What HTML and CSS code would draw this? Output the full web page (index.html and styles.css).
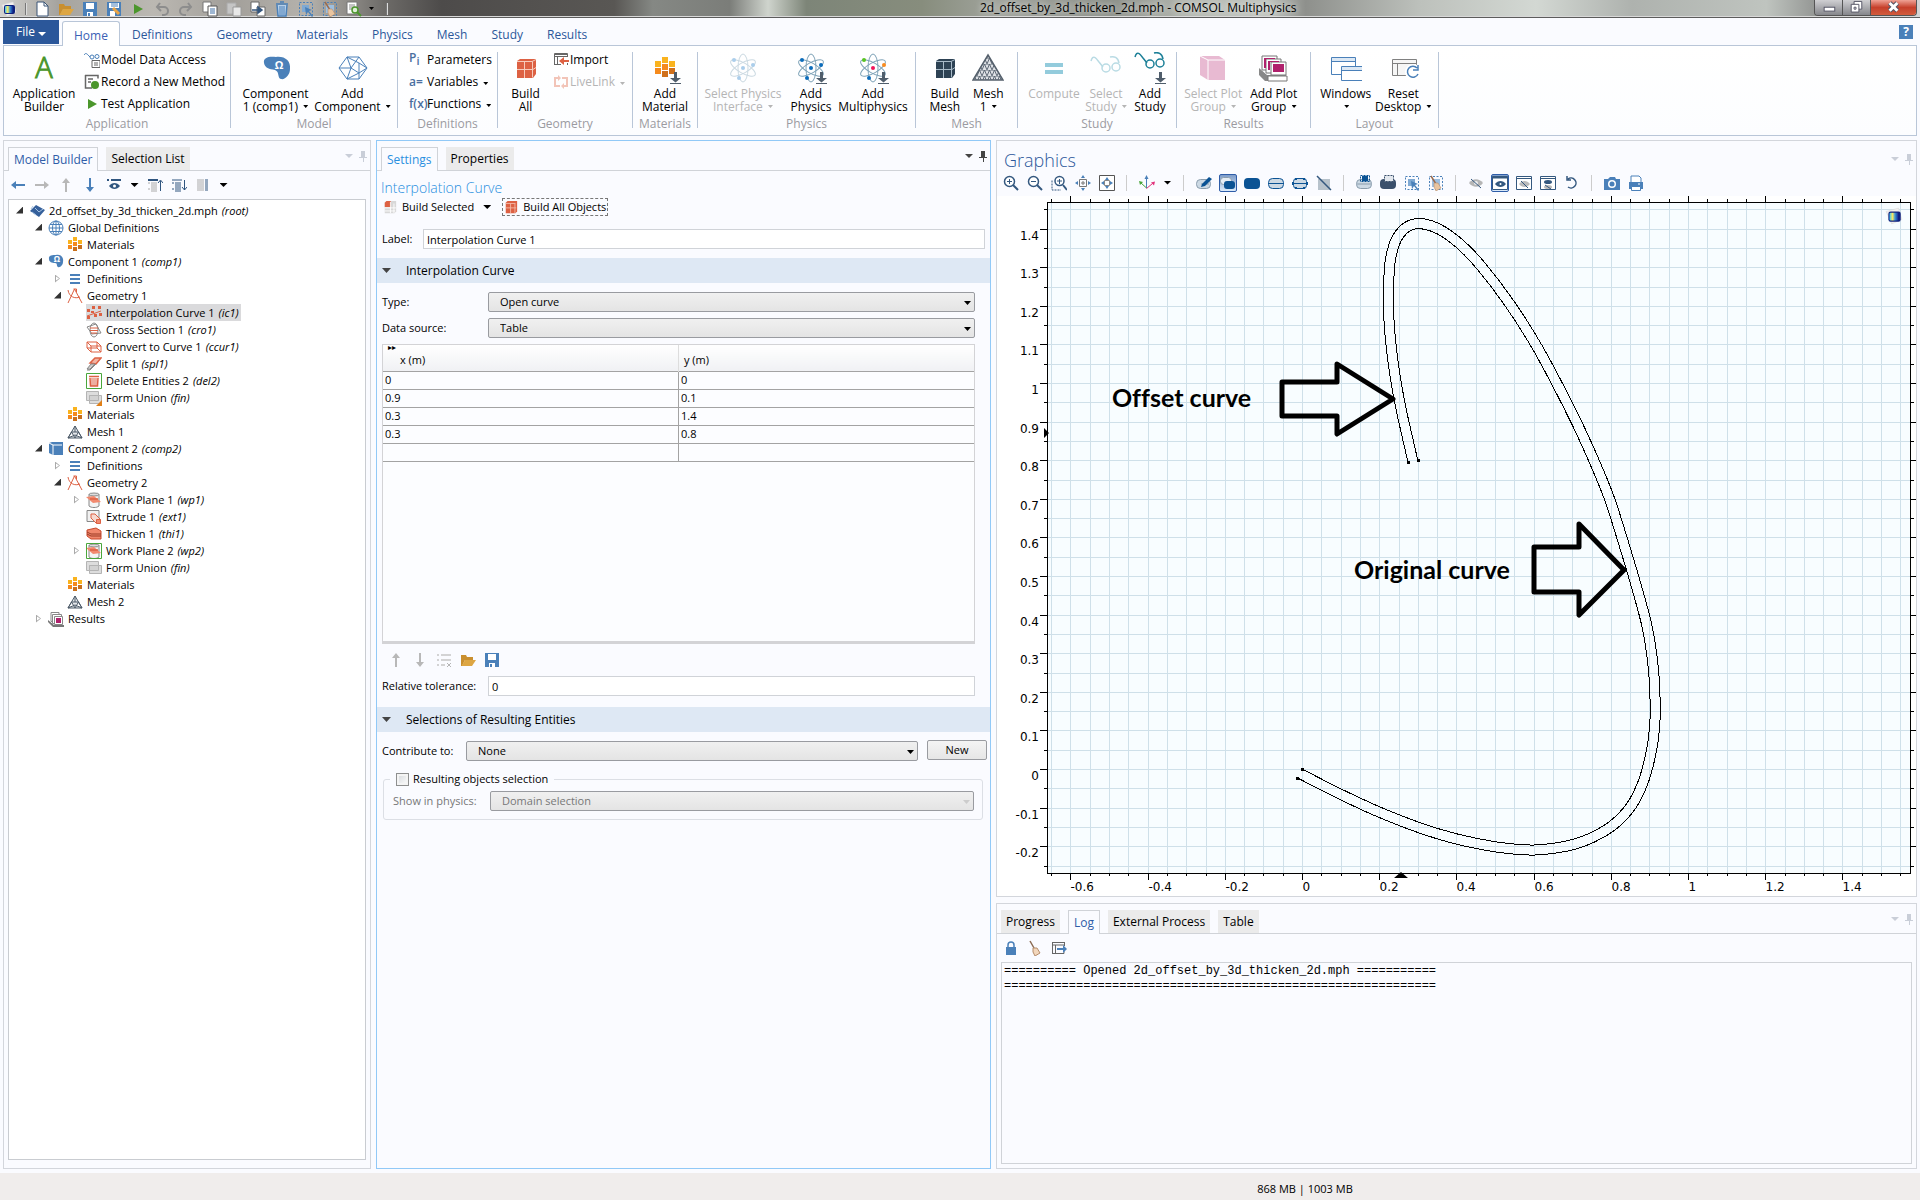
FILE: index.html
```html
<!DOCTYPE html>
<html lang="en">
<head>
<meta charset="utf-8">
<title>2d_offset_by_3d_thicken_2d.mph - COMSOL Multiphysics</title>
<link rel="stylesheet" href="styles.css">
</head>
<body>
<svg class="sprite" aria-hidden="true">
  <defs>
    <linearGradient id="logo-fill" x1="0" y1="0" x2="1" y2="0">
      <stop offset="0" stop-color="#3cc8ff"/><stop offset=".35" stop-color="#ffe95c"/><stop offset=".6" stop-color="#3f9ad8"/><stop offset="1" stop-color="#10208c"/>
    </linearGradient>
    <pattern id="mesh-fill" width="5" height="6" patternUnits="userSpaceOnUse">
      <path d="M0 0H5M0 6L2.500 0L5 6" fill="none" stroke="#5b6673" stroke-width="1"/>
    </pattern>
  </defs>
  <symbol id="i-logo" viewBox="0 0 16 16"><path d="M1 4L12 1L15 11L6 15z" fill="#f3f0ee" stroke="#ddd" stroke-width=".6"/><rect x="3" y="4" width="11" height="9" rx="2" fill="#10207c"/><rect x="4" y="5" width="8" height="7" rx="1" fill="url(#logo-fill)"/></symbol>
  <symbol id="i-new" viewBox="0 0 16 16"><path d="M3 1h7l4 4v10H3z" fill="#fff" stroke="#3a5576"/><path d="M10 1v4h4" fill="none" stroke="#3a5576"/></symbol>
  <symbol id="i-open" viewBox="0 0 16 16"><path d="M1 14V3h5l1 2h6v3H5L2 14z" fill="#c98f2f"/><path d="M5 8h11l-4 6H1.500z" fill="#dda643"/></symbol>
  <symbol id="i-save" viewBox="0 0 16 16"><path d="M1 1h14v14H1z" fill="#4a80b9"/><path d="M4 2h8v6H4zM5 11h6v4H5z" fill="#fff"/><path d="M6 12h2v3H6z" fill="#4a80b9"/></symbol>
  <symbol id="i-saveas" viewBox="0 0 16 16"><path d="M1 1h14v14H1z" fill="#4a80b9"/><path d="M3 2h10v5H3zM4 10h5v5H4z" fill="#fff"/><path d="M7 7l6 6" stroke="#e8a548" stroke-width="3"/><path d="M5 5h7M5 3h7" stroke="#4a80b9"/></symbol>
  <symbol id="i-play" viewBox="0 0 16 16"><path d="M4 3l9 5-9 5z" fill="#4b962c"/></symbol>
  <symbol id="i-undo" viewBox="0 0 16 16"><path d="M3 6h7a4 4 0 0 1 0 8H8M6 2L3 6l4 4" fill="none" stroke="#8d8d8d" stroke-width="2"/></symbol>
  <symbol id="i-redo" viewBox="0 0 16 16"><path d="M13 6H6a4 4 0 0 0 0 8h2M10 2l3 4-4 4" fill="none" stroke="#8d8d8d" stroke-width="2"/></symbol>
  <symbol id="i-copy" viewBox="0 0 16 16"><path d="M1 1h8v10H1z" fill="#fff" stroke="#777"/><path d="M6 5h9v10H6z" fill="#fff" stroke="#555"/><path d="M8 8h5M8 10h5M8 12h5" stroke="#3f6fa5"/></symbol>
  <symbol id="i-paste" viewBox="0 0 16 16"><path d="M1 2h9v11H1z" fill="#c5c5c5" stroke="#aaa"/><path d="M7 6h8v9H7z" fill="#e8e8e8" stroke="#999"/></symbol>
  <symbol id="i-dup" viewBox="0 0 16 16"><path d="M1 1h8v10H1zM7 6h8v9H7z" fill="#fff" stroke="#666"/><path d="M2 9h8M8 6l4 3-4 3z" fill="#34557c" stroke="#34557c" stroke-width="1.500"/></symbol>
  <symbol id="i-trash" viewBox="0 0 16 16"><path d="M2 3h12M6 1h4M3 4l1 11h8l1-11" fill="#b8d0e8" stroke="#4a80b9" stroke-width="1.500"/><path d="M6 5v9M8 5v9M10 5v9" stroke="#4a80b9"/></symbol>
  <symbol id="i-select" viewBox="0 0 16 16"><rect x="1.500" y="1.500" width="13" height="13" fill="none" stroke="#4a80b9" stroke-dasharray="2 1.500"/><path d="M4 4h7v7H4z" fill="#7fa9d3"/><path d="M7 6l7 3-3 1 4 5-1 1-4-5-2 3z" fill="#4a80b9"/></symbol>
  <symbol id="i-clear" viewBox="0 0 16 16"><rect x="1.500" y="1.500" width="13" height="13" fill="none" stroke="#4a80b9" stroke-dasharray="2 1.500"/><path d="M4 4h8v8H4z" fill="#9dbfe0"/><path d="M3 1l5 8" stroke="#9a6b4d" stroke-width="1.500"/><path d="M6 8l4 0 3 5-5 3-2-4z" fill="#e9c5a0" stroke="#b48c6b" stroke-width=".6"/></symbol>
  <symbol id="i-find" viewBox="0 0 16 16"><path d="M1 1h10v12H1z" fill="#fff" stroke="#777"/><path d="M3 4h6M3 6h6M3 8h3" stroke="#888"/><circle cx="9" cy="9" r="3" fill="#dff0d8" stroke="#4b962c" stroke-width="1.500"/><path d="M11 11l4 4" stroke="#4b962c" stroke-width="2"/></symbol>

  <symbol id="b-comp" viewBox="0 0 32 32"><path d="M4 11C3 5 10 4 16 5C25 4 31 9 30 17C30 23 25 28 21 27C17 26 20 20 15 18C9 17 5 16 4 11z" fill="#4a80b9"/></symbol>
  <symbol id="b-addcomp" viewBox="0 0 32 32"><path d="M2 16L10 5H22L30 16L22 27H10zM10 5L14 16L10 27M2 16L14 16M10 5L22 11L30 16M14 16L22 5M14 16L22 21L30 16M22 11V21L10 27M22 21L22 27" fill="none" stroke="#4a80b9"/></symbol>
  <symbol id="b-cube" viewBox="0 0 32 32"><path d="M7 9l3-2h16l0 15-3 4H7z" fill="#dd6143"/><path d="M7 9.500h15l4-2M22.500 9.500v16M14.500 9v17M7 17.500h16l3-2" fill="none" stroke="#f7cabb"/></symbol>
  <symbol id="b-cube-dark" viewBox="0 0 32 32"><path d="M7 9l3-2h16l0 15-3 4H7z" fill="#2d4254"/><path d="M7 9.500h15l4-2M22.500 9.500v16M14.500 9v17M7 17.500h16l3-2" fill="none" stroke="#a8bac8"/></symbol>
  <symbol id="b-mat" viewBox="0 0 32 32"><g stroke-width="0"><path d="M6 9h6v6H6zM13 5h6v6h-6zM20 9h6v6h-6z" fill="#fab31e"/><path d="M6 16h6v6H6zM13 12h6v6h-6z" fill="#f58a1c"/><path d="M13 19h6v6h-6zM20 16h6v6h-6z" fill="#d0701c"/></g><use href="#down-mark"/></symbol>
  <symbol id="down-mark" viewBox="0 0 32 32"><path d="M25 20h3v6h4l-5.500 4.500L21 26h4zM21 31h11v1H21z" fill="#4f5d6b"/></symbol>
  <g id="atom"><g fill="none" stroke="#7fa3b8" stroke-width="1"><ellipse cx="16" cy="16" rx="5" ry="14"/><ellipse cx="16" cy="16" rx="5" ry="14" transform="rotate(60 16 16)"/><ellipse cx="16" cy="16" rx="5" ry="14" transform="rotate(120 16 16)"/></g></g>
  <symbol id="b-atom-off" viewBox="0 0 32 32"><g opacity=".4"><use href="#atom"/><g fill="#2f86cf"><circle cx="16" cy="16" r="2"/><circle cx="7" cy="8" r="2"/><circle cx="26" cy="13" r="2"/><circle cx="12" cy="26" r="2"/></g></g></symbol>
  <symbol id="b-atom" viewBox="0 0 32 32"><use href="#atom"/><g fill="#0b6cbb"><circle cx="16" cy="16" r="2"/><circle cx="7" cy="8" r="2"/><circle cx="26" cy="13" r="2"/><circle cx="12" cy="26" r="2"/></g><use href="#down-mark"/></symbol>
  <symbol id="b-atom-multi" viewBox="0 0 32 32"><use href="#atom"/><circle cx="16" cy="16" r="2" fill="#f0145a"/><circle cx="7" cy="8" r="2" fill="#58c322"/><circle cx="27" cy="13" r="2" fill="#fa8b1e"/><circle cx="12" cy="26" r="2" fill="#0b6cbb"/><use href="#down-mark"/></symbol>
  <symbol id="b-mesh" viewBox="0 0 32 32"><path d="M16 3L31 28H1z" fill="#dfe2e6"/><path d="M16 3L31 28H1z" fill="url(#mesh-fill)" stroke="#55606c" stroke-width="1.500"/></symbol>
  <symbol id="b-equal" viewBox="0 0 32 32"><path d="M7 11h18v4H7zM7 18h18v4H7z" fill="#93cbdc"/></symbol>
  <g id="glasses" fill="none" stroke-width="1.500"><path d="M1 9C3 2 6 6 9 10L13 15M20 5C24 4 28 5 29 11"/><circle cx="16" cy="16" r="4"/><circle cx="26" cy="15" r="4"/></g>
  <symbol id="b-glasses-off" viewBox="0 0 32 32"><g stroke="#b9dbe4"><use href="#glasses"/></g></symbol>
  <symbol id="b-glasses" viewBox="0 0 32 32"><g stroke="#1b7f97" transform="translate(0 -4)"><use href="#glasses"/></g><use href="#down-mark"/></symbol>
  <symbol id="b-plot-off" viewBox="0 0 32 32"><path d="M3 4l19 0 6 4v20H11L3 23z" fill="#e8bad2"/><path d="M3 4l8 4h17M11 8v20" fill="none" stroke="#fff"/></symbol>
  <symbol id="b-plot" viewBox="0 0 32 32"><g stroke="#777" fill="#fff"><path d="M4 4h15v14H4z"/><path d="M8 7h15v14H8z"/><path d="M13 10h15v13H13z"/></g><path d="M6 6h11v1H8v9H6zM10 9h11v1h-9v8h-2zM15 12h11v8H15z" fill="#b0216c"/><path d="M1 16v7l6 6h21v-6H9z" fill="#888"/><path d="M10 24h19v5H10z" fill="#fff" stroke="#777"/></symbol>
  <symbol id="b-windows" viewBox="0 0 32 32"><g fill="#fff" stroke="#4a80b9"><path d="M1.500 5.500h24v17h-24z"/><path d="M11.500 14.500h21v14h-21z"/></g><path d="M2 6h23v3H2zM12 15h20v3H12z" fill="#dce8f4"/><path d="M1 9.500h24M12 18.500h20" stroke="#4a80b9"/></symbol>
  <symbol id="b-reset" viewBox="0 0 32 32"><path d="M5.500 7.500h24v16h-24zM5 11.500h25M10.500 12v12" fill="#f6f6f6" stroke="#808080"/><circle cx="26" cy="20" r="8" fill="#fff"/><path d="M30 16a5.500 5.500 0 1 0 1 6M31 13v5h-5" fill="none" stroke="#4a80b9" stroke-width="1.500"/></symbol>

  <symbol id="i-access" viewBox="0 0 16 16"><path d="M0 3C2 0 3 2 6 5" fill="none" stroke="#4a80b9"/><circle cx="8" cy="5" r="2" fill="none" stroke="#4a80b9"/><circle cx="13" cy="4.500" r="2" fill="none" stroke="#4a80b9"/><path d="M8 8.500h8v7H8zM10 11h4M10 13h4" fill="#fff" stroke="#666"/></symbol>
  <symbol id="i-record" viewBox="0 0 16 16"><path d="M1 1.500h13v3M1.500 1v13H8M4 5h5M4 8h3" fill="none" stroke="#666" stroke-width="1.500"/><circle cx="11" cy="11" r="4" fill="#4b962c"/></symbol>
  <symbol id="i-import" viewBox="0 0 16 16"><path d="M1 2.500h14M1.500 13V1.500h13V5M1 4.500h14M1 12.500h7M4.500 5v8M14.500 11v2" fill="none" stroke="#666"/><path d="M16 9H8" stroke="#dd6143" stroke-width="2"/><path d="M11 5v8L6 9z" fill="#dd6143"/></symbol>
  <symbol id="i-livelink" viewBox="0 0 16 16"><path d="M6 4H2v8h4M4 12h3M10 12h4V4h-4M12 4H9" fill="none" stroke="#f2c4b8" stroke-width="2"/><path d="M5 1l3 3-3 3zM11 9l-3 3 3 3z" fill="#f2c4b8"/></symbol>

  <symbol id="i-left" viewBox="0 0 16 16"><path d="M1 8l5-4v3h9v2H6v3z"/></symbol>
  <symbol id="i-right" viewBox="0 0 16 16"><path d="M15 8l-5-4v3H1v2h9v3z"/></symbol>
  <symbol id="i-up" viewBox="0 0 16 16"><path d="M8 1l4 5H9v9H7V6H4z"/></symbol>
  <symbol id="i-down" viewBox="0 0 16 16"><path d="M8 15l4-5H9V1H7v9H4z"/></symbol>
  <symbol id="i-showeye" viewBox="0 0 16 16"><path d="M1 3h2M5 3h10" stroke="#2f557f" stroke-width="2"/><path d="M3 9c3-4 8-4 11 0c-3 4-8 4-11 0z" fill="#2f557f"/><circle cx="8.500" cy="9" r="1.500" fill="#fff"/></symbol>
  <symbol id="i-collapse" viewBox="0 0 16 16"><path d="M1 3h10" stroke="#2f557f" stroke-width="2"/><path d="M1 6h2M4 6h6M4 8h6M4 10h6M1 12h2M4 12h6M4 14h6" stroke="#aaa"/><path d="M13.500 14V4M11 6l2.500-3L16 6" fill="none" stroke="#2f557f"/></symbol>
  <symbol id="i-expand" viewBox="0 0 16 16"><path d="M1 3h10M1 6h2M4 6h6M4 8h6M4 10h6M1 12h2M4 12h6M4 14h6" stroke="#2f557f"/><path d="M13.500 3v10M11 10l2.500 3L16 10" fill="none" stroke="#2f557f"/></symbol>
  <symbol id="i-cols" viewBox="0 0 16 16"><path d="M2 3h7M2 5h7M2 7h7M2 9h7M2 11h7M2 13h7" stroke="#aaa"/><path d="M10 3h3M10 5h3M10 7h3M10 9h3M10 11h3M10 13h3" stroke="#2f557f"/></symbol>

  <symbol id="t-root" viewBox="0 0 16 16"><path d="M1 8l6-6 9 5-6 7z" fill="#35609b"/><path d="M4 3L2 6M3 9l4 3M6 5l4 4 4-3" stroke="#a8c4e2" fill="none"/></symbol>
  <symbol id="t-globe" viewBox="0 0 16 16"><g fill="none" stroke="#4a80b9"><circle cx="8" cy="8" r="7"/><ellipse cx="8" cy="8" rx="3.500" ry="7"/><path d="M8 1v14M1 8h14M2 4.500h12M2 11.500h12"/></g></symbol>
  <symbol id="t-mat" viewBox="0 0 16 16"><path d="M1 3h4v4H1zM6 0h4v4H6zM11 3h4v4h-4z" fill="#fab31e"/><path d="M1 8h4v4H1zM6 5h4v4H6z" fill="#f58a1c"/><path d="M6 10h4v4H6zM11 8h4v4h-4z" fill="#c9701c"/></symbol>
  <symbol id="t-comp" viewBox="0 0 16 16"><path d="M1 5C0 1 5 1 8 1c5-1 8 3 7 7c0 3-3 6-5 5c-2-1 0-4-3-4C4 9 1 8 1 5z" fill="#4a80b9"/></symbol>
  <symbol id="t-comp3" viewBox="0 0 16 16"><path d="M1 2l3-1h11v13H5l-4-2z" fill="#4a80b9"/><path d="M1 2l4 2h9M5 4v10" fill="none" stroke="#fff"/></symbol>
  <symbol id="t-defs" viewBox="0 0 16 16"><path d="M3 4h10M3 8h10M3 12h10" stroke="#4a80b9" stroke-width="2"/></symbol>
  <symbol id="t-geom" viewBox="0 0 16 16"><path d="M1 15L7.500 1L15 15M1 2c1 7 7 9 12 7M6.500 1h3v3" fill="none" stroke="#dd6143"/></symbol>
  <symbol id="t-ic" viewBox="0 0 16 16"><path d="M1 11C6 9 10 8 15 6" stroke="#dd6143" fill="none"/><path d="M1 4h3v3H1zM6 1h3v3H6zM12 1h3v3h-3zM1 11h3v3H1zM8 9h3v3H8zM13 8h3v3h-3zM5 6h3v2H5z" fill="#dd6143"/></symbol>
  <symbol id="t-cross" viewBox="0 0 16 16"><g fill="none" stroke="#888"><ellipse cx="8" cy="8" rx="4" ry="7"/><path d="M1 5l9-3 5 9-9 1z"/></g><path d="M4 6h8M4 8.500h8M5 11h6" stroke="#dd6143"/></symbol>
  <symbol id="t-ccur" viewBox="0 0 16 16"><path d="M1 3h10l4 4v6H5l-4-4zM1 3l4 4h10M5 7v6M1 9h10l4 4M11 3v6" fill="none" stroke="#dd6143"/></symbol>
  <symbol id="t-split" viewBox="0 0 16 16"><path d="M4 7L9 2h6l-5 6z" fill="#f2b3a3" stroke="#dd6143" stroke-width="1.500"/><path d="M1 13l4-5h4l-5 5zM1 14h3l6-6" fill="#ccc" stroke="#888"/></symbol>
  <symbol id="t-del" viewBox="0 0 16 16"><path d="M.5.5h15v15H.5z" fill="#fff" stroke="#4aa63b"/><path d="M3 3.500h10M4 5l.5 8h7l.5-8" fill="none" stroke="#dd6143" stroke-width="1.500"/><path d="M6 5v8M8 5v8M10 5v8" stroke="#dd6143"/></symbol>
  <symbol id="t-union" viewBox="0 0 16 16"><path d="M.5 1.500h12v9H.5z" fill="#ddd" stroke="#b4b4b4"/><path d="M3.500 5.500h12v8h-12z" fill="#ddd" stroke="#b4b4b4"/><path d="M3.500 5.500h9v5h-9z" fill="#d2d2d2" stroke="#b4b4b4"/></symbol>
  <symbol id="t-union-w" viewBox="0 0 16 16"><use href="#t-union"/><path d="M16 10v6h-6z" fill="#e07f17"/></symbol>
  <symbol id="t-mesh" viewBox="0 0 16 16"><path d="M8 2l7 12H1zM4.500 8h7L8 14zM8 2v6M4.500 8L1 14l7-3 7 3-3.500-6" fill="#e4e7ea" stroke="#4c5a68"/></symbol>
  <symbol id="t-wp" viewBox="0 0 16 16"><path d="M3 2v12c2 2 8 2 10 0V2" fill="#f4f4f4" stroke="#888"/><ellipse cx="8" cy="2.500" rx="5" ry="1.500" fill="#ddd" stroke="#888"/><path d="M0 5l8-1 7 6-8 1z" fill="#f28a6f"/><path d="M4 7h8" stroke="#dd6143" stroke-width="1.500"/></symbol>
  <symbol id="t-wp2" viewBox="0 0 16 16"><use href="#t-wp"/><path d="M.5.5h15v15H.5z" fill="none" stroke="#4aa63b"/></symbol>
  <symbol id="t-ext" viewBox="0 0 16 16"><path d="M1 1.500h12v11H1z" fill="#f1f1f1" stroke="#888"/><path d="M5 5h4l5 5v4h-4L5 9z" fill="#f6d9d0" stroke="#dd6143"/><path d="M10.500 10.500h4v4h-4z" fill="#f28a6f" stroke="#dd6143"/></symbol>
  <symbol id="t-thi" viewBox="0 0 16 16"><path d="M1 4l9-2 5 3v8H5l-4-3z" fill="#f0876c" stroke="#c9492c"/><path d="M1 6l4 2h10M1 8l4 2h10" fill="none" stroke="#9b3a25"/></symbol>
  <symbol id="t-res" viewBox="0 0 16 16"><g fill="#fff" stroke="#888"><path d="M3 1.500h8v9H3z"/><path d="M4.500 3.500h9v9h-9z"/><path d="M6.500 5.500h8v8h-8z"/></g><path d="M8 7h5v5H8z" fill="#b0216c"/><path d="M0 9v2l5 5h11v-2H6z" fill="#777"/></symbol>

  <symbol id="i-buildsel" viewBox="0 0 16 16"><path d="M2 3l2-2h11v12l-2 2H2z" fill="#d8d8d8"/><path d="M2 3l2-2h5v7H2z" fill="#dd6143"/><path d="M2 9h13M8.500 2v13M12.500 4v11M2 12.500h12" stroke="#fff"/></symbol>
  <symbol id="i-buildall" viewBox="0 0 16 16"><path d="M2 3l2-2h11v12l-2 2H2z" fill="#dd6143"/><path d="M2 4h11M2 9h12M7.500 4v11M12.500 4v11" stroke="#f3b9a8"/></symbol>
  <symbol id="i-listdel" viewBox="0 0 16 16"><path d="M1 3h2M5 3h10M1 8h2M5 8h10M1 13h2M5 13h4" stroke="#c6c6c6" stroke-width="1.500"/><path d="M11 11l4 4M15 11l-4 4" stroke="#b5b5b5"/></symbol>

  <symbol id="g-zoomin" viewBox="0 0 16 16"><circle cx="6.500" cy="6.500" r="5" fill="#fff" stroke="#34587f" stroke-width="1.500"/><path d="M4 6.500h5M6.500 4v5" stroke="#34587f"/><path d="M10 10l5 5" stroke="#34587f" stroke-width="2"/></symbol>
  <symbol id="g-zoomout" viewBox="0 0 16 16"><circle cx="6.500" cy="6.500" r="5" fill="#fff" stroke="#34587f" stroke-width="1.500"/><path d="M4 6.500h5" stroke="#34587f"/><path d="M10 10l5 5" stroke="#34587f" stroke-width="2"/></symbol>
  <symbol id="g-zoombox" viewBox="0 0 16 16"><path d="M1 5.500V15h9" fill="none" stroke="#34587f" stroke-dasharray="2 1"/><circle cx="8.500" cy="6" r="4.500" fill="#fff" stroke="#34587f" stroke-width="1.500"/><path d="M6 6h5M8.500 4v5" stroke="#34587f"/><path d="M12 10l4 5" stroke="#34587f" stroke-width="2"/></symbol>
  <symbol id="g-center" viewBox="0 0 16 16"><path d="M4.500 4.500h7v7h-7zM8 6v4M6 8h4" fill="none" stroke="#777"/><path d="M8 0l2 3H6zM8 16l2-3H6zM0 8l3-2v4zM16 8l-3-2v4z" fill="#4a80b9"/></symbol>
  <symbol id="g-extents" viewBox="0 0 16 16"><path d="M.5.5h15v15H.5z" fill="#fff" stroke="#555"/><path d="M5.500 5.500h5v5h-5z" fill="none" stroke="#888"/><path d="M8 2l2 3H6zM8 14l2-3H6zM2 8l3-2v4zM14 8l-3-2v4z" fill="#4a80b9"/></symbol>
  <symbol id="g-axes" viewBox="0 0 16 16"><path d="M7.500 13V2" stroke="#4a80b9"/><path d="M5.500 4l2-4 2 4z" fill="#4a80b9"/><path d="M7.500 13L2 8" stroke="#4aa63b"/><path d="M0 6l4 1-3 3z" fill="#4aa63b"/><path d="M7.500 13.500l6-5" stroke="#e2307a"/><path d="M16 6.500l-1 4-3-3z" fill="#e2307a"/></symbol>
  <symbol id="g-edit" viewBox="0 0 16 16"><rect x=".5" y="4.500" width="14" height="9" rx="4" fill="#ccd9e4" stroke="#8a9dad"/><path d="M5 9h8" stroke="#8a9dad"/><path d="M6 9l7-7 3 2-7 7-4 1z" fill="#0b5394"/></symbol>
  <symbol id="g-objects" viewBox="0 0 16 16"><rect x=".5" y="2.500" width="11" height="7" rx="3" fill="#e5edf5" stroke="#8a9dad"/><rect x="4" y="6" width="11" height="8" rx="3" fill="#0b5394"/></symbol>
  <symbol id="g-domain" viewBox="0 0 16 16"><rect x="0" y="3" width="16" height="11" rx="4" fill="#0b5394"/></symbol>
  <symbol id="g-boundary" viewBox="0 0 16 16"><rect x=".5" y="3.500" width="15" height="10" rx="4" fill="#ccd9e4" stroke="#0b5394"/><path d="M1 8.500h14" stroke="#0b5394"/></symbol>
  <symbol id="g-point" viewBox="0 0 16 16"><rect x="1.500" y="3.500" width="13" height="10" rx="3" fill="#ccd9e4" stroke="#0b5394"/><path d="M1 8.500h14" stroke="#0b5394"/><path d="M3 3h2v2H3zM11 3h2v2h-2zM3 12h2v2H3zM11 12h2v2h-2zM0 7h2v3H0zM14 7h2v3h-2z" fill="#0b5394"/></symbol>
  <symbol id="g-none" viewBox="0 0 16 16"><path d="M2 4h12v11H2z" fill="#b7c2cb"/><path d="M1 1l14 14" stroke="#34587f" stroke-width="1.500"/></symbol>
  <symbol id="g-hl1" viewBox="0 0 16 16"><rect x=".5" y="4.500" width="15" height="9" rx="4" fill="#ccd9e4" stroke="#8a9dad"/><path d="M1 9h14" stroke="#8a9dad"/><path d="M6 1h6v5H6z" fill="#0b5394"/><path d="M4.500 .5h9v6h-9z" fill="none" stroke="#0b5394" stroke-dasharray="2 1"/></symbol>
  <symbol id="g-hl2" viewBox="0 0 16 16"><rect x="0" y="4" width="16" height="10" rx="4" fill="#3a4f6b"/><path d="M4.500 .5h9v6h-9z" fill="#e3e8ee" stroke="#3a4f6b" stroke-dasharray="2 1"/></symbol>
  <symbol id="g-eyeoff" viewBox="0 0 16 16"><path d="M1 8c4-5 10-5 14 0c-4 5-10 5-14 0z" fill="#b5b5b5"/><circle cx="8" cy="8" r="2" fill="#eee"/><path d="M3 4l10 9" stroke="#34587f"/></symbol>
  <symbol id="g-eye" viewBox="0 0 16 16"><path d="M.5 1.500h15v13H.5z" fill="#fff" stroke="#34587f"/><path d="M0 2.500h16" stroke="#34587f" stroke-width="2"/><path d="M3 9c3-4 8-4 11 0c-3 4-8 4-11 0z" fill="#34587f"/><circle cx="8.500" cy="9" r="1" fill="#fff"/></symbol>
  <symbol id="g-eyehide" viewBox="0 0 16 16"><path d="M.5 1.500h15v13H.5z" fill="#fff" stroke="#34587f"/><path d="M0 3.500h16" stroke="#34587f"/><path d="M3 9c3-4 8-4 11 0c-3 4-8 4-11 0z" fill="#bbb"/><path d="M5 6l7 7" stroke="#34587f"/></symbol>
  <symbol id="g-eyeboth" viewBox="0 0 16 16"><path d="M.5 1.500h15v13H.5z" fill="#fff" stroke="#34587f"/><path d="M0 3.500h16" stroke="#34587f"/><ellipse cx="8" cy="7" rx="4" ry="2" fill="#34587f"/><ellipse cx="8" cy="12" rx="4" ry="2" fill="#bbb"/><path d="M5 10l6 4" stroke="#34587f"/></symbol>
  <symbol id="g-reset" viewBox="0 0 16 16"><path d="M4 4a5 5 0 1 1 0 8M3 1v4h4" fill="none" stroke="#34587f" stroke-width="1.500"/></symbol>
  <symbol id="g-camera" viewBox="0 0 16 16"><path d="M0 4h4l2-2h5l1 2h4v11H0z" fill="#4a80b9"/><circle cx="8" cy="9" r="4" fill="#fff"/><circle cx="8" cy="9" r="2.500" fill="#4a80b9"/></symbol>
  <symbol id="g-print" viewBox="0 0 16 16"><path d="M3 1h8l2 2v5H3z" fill="#fff" stroke="#4a80b9"/><path d="M1 7h14v7H1z" fill="#4a80b9"/><path d="M3.500 11.500h9v4h-9z" fill="#fff" stroke="#4a80b9"/><path d="M10 9h2" stroke="#fff"/></symbol>
  <symbol id="i-lock" viewBox="0 0 16 16"><path d="M3 7h10v8H3z" fill="#4a80b9"/><path d="M5 7V5a3 3 0 0 1 6 0v2" fill="none" stroke="#4a80b9" stroke-width="1.500"/></symbol>
  <symbol id="i-broom" viewBox="0 0 16 16"><path d="M3 1l4 7" stroke="#8a6a52" stroke-width="1.500"/><path d="M6 8h4l3 5-5 3-2-4z" fill="#f2d6bb" stroke="#b48c6b"/></symbol>
  <symbol id="i-export" viewBox="0 0 16 16"><path d="M1 2.500h13M1.500 13.500V2.500h12V6M1 5h13M1 13.500h12V11M4.500 5v9" fill="none" stroke="#666"/><path d="M6 9h7" stroke="#4a80b9" stroke-width="2"/><path d="M12 5v8l4-4z" fill="#4a80b9"/></symbol>
  <symbol id="i-pin" viewBox="0 0 10 12"><path d="M3 1h4v6h2v1H6v4H5V8H1V7h2z"/></symbol>
</svg>

<div class="window">
  <header class="titlebar">
    <div class="quick">
      <svg class="ico"><use href="#i-logo"/></svg><i class="tsep"></i>
      <button title="New"><svg class="ico"><use href="#i-new"/></svg></button>
      <button title="Open"><svg class="ico"><use href="#i-open"/></svg></button>
      <button title="Save"><svg class="ico"><use href="#i-save"/></svg></button>
      <button title="Save As"><svg class="ico"><use href="#i-saveas"/></svg></button>
      <button title="Run"><svg class="ico"><use href="#i-play"/></svg></button>
      <button title="Undo"><svg class="ico"><use href="#i-undo"/></svg></button>
      <button title="Redo"><svg class="ico"><use href="#i-redo"/></svg></button>
      <button title="Copy"><svg class="ico"><use href="#i-copy"/></svg></button>
      <button title="Paste"><svg class="ico"><use href="#i-paste"/></svg></button>
      <button title="Duplicate"><svg class="ico"><use href="#i-dup"/></svg></button>
      <button title="Delete"><svg class="ico"><use href="#i-trash"/></svg></button>
      <button title="Select"><svg class="ico"><use href="#i-select"/></svg></button>
      <button title="Clear"><svg class="ico"><use href="#i-clear"/></svg></button>
      <button title="Find"><svg class="ico"><use href="#i-find"/></svg></button>
      <i class="caret small"></i><i class="tsep"></i>
    </div>
    <div class="wintitle">2d_offset_by_3d_thicken_2d.mph - COMSOL Multiphysics</div>
    <div class="winbtns">
      <button title="Minimize"><svg viewBox="0 0 28 16"><rect x="9.500" y="7.500" width="11" height="4" fill="#fff" stroke="#556"/></svg></button>
      <button title="Restore"><svg viewBox="0 0 28 16"><path d="M11.500 1.500h8v8h-8z" fill="#fff" stroke="#556"/><path d="M8.500 4.500h8v8h-8zM11.500 7.500h2v2h-2z" fill="#fff" stroke="#556"/></svg></button>
      <button title="Close" class="close"><svg viewBox="0 0 46 16"><path d="M19 3l8 8M27 3l-8 8" stroke="#556" stroke-width="5"/><path d="M19 3l8 8M27 3l-8 8" stroke="#fff" stroke-width="3"/></svg></button>
    </div>
  </header>

  <nav class="menu">
    <button class="file">File <i class="caret"></i></button>
    <a href="#" class="active">Home</a><a href="#">Definitions</a><a href="#">Geometry</a><a href="#">Materials</a><a href="#">Physics</a><a href="#">Mesh</a><a href="#">Study</a><a href="#">Results</a>
    <button class="help" title="Help">?</button>
  </nav>

  <section class="ribbon">
    <div class="group g-app">
      <div class="gbody">
        <button class="big"><svg viewBox="0 0 32 32"><text x="16" y="26" text-anchor="middle" class="glyph-a">A</text></svg><span>Application</span><span>Builder</span></button>
        <div class="stack">
          <button><svg class="ico"><use href="#i-access"/></svg>Model Data Access</button>
          <button><svg class="ico"><use href="#i-record"/></svg>Record a New Method</button>
          <button><svg class="ico"><use href="#i-play"/></svg>Test Application</button>
        </div>
      </div><h2>Application</h2>
    </div>
    <div class="group g-model">
      <div class="gbody">
        <button class="big"><svg viewBox="0 0 32 32"><use href="#b-comp"/><text x="19" y="17" text-anchor="middle" class="glyph-omega">Ω</text></svg><span>Component</span><span>1 (comp1) <i class="caret small"></i></span></button>
        <button class="big"><svg><use href="#b-addcomp"/></svg><span>Add</span><span>Component <i class="caret small"></i></span></button>
      </div><h2>Model</h2>
    </div>
    <div class="group g-defs">
      <div class="gbody"><div class="stack">
        <button><b>P<sub>i</sub></b>Parameters</button>
        <button><b>a=</b>Variables <i class="caret small"></i></button>
        <button><b>f(x)</b>Functions <i class="caret small"></i></button>
      </div></div><h2>Definitions</h2>
    </div>
    <div class="group g-geom">
      <div class="gbody">
        <button class="big"><svg><use href="#b-cube"/></svg><span>Build</span><span>All</span></button>
        <div class="stack">
          <button><svg class="ico"><use href="#i-import"/></svg>Import</button>
          <button disabled><svg class="ico"><use href="#i-livelink"/></svg>LiveLink <i class="caret small"></i></button>
        </div>
      </div><h2>Geometry</h2>
    </div>
    <div class="group g-mat">
      <div class="gbody"><button class="big"><svg><use href="#b-mat"/></svg><span>Add</span><span>Material</span></button></div><h2>Materials</h2>
    </div>
    <div class="group g-phys">
      <div class="gbody">
        <button class="big" disabled><svg><use href="#b-atom-off"/></svg><span>Select Physics</span><span>Interface <i class="caret small"></i></span></button>
        <button class="big"><svg><use href="#b-atom"/></svg><span>Add</span><span>Physics</span></button>
        <button class="big"><svg><use href="#b-atom-multi"/></svg><span>Add</span><span>Multiphysics</span></button>
      </div><h2>Physics</h2>
    </div>
    <div class="group g-mesh">
      <div class="gbody">
        <button class="big"><svg><use href="#b-cube-dark"/></svg><span>Build</span><span>Mesh</span></button>
        <button class="big"><svg><use href="#b-mesh"/></svg><span>Mesh</span><span>1 <i class="caret small"></i></span></button>
      </div><h2>Mesh</h2>
    </div>
    <div class="group g-study">
      <div class="gbody">
        <button class="big" disabled><svg><use href="#b-equal"/></svg><span>Compute</span></button>
        <button class="big" disabled><svg><use href="#b-glasses-off"/></svg><span>Select</span><span>Study <i class="caret small"></i></span></button>
        <button class="big"><svg><use href="#b-glasses"/></svg><span>Add</span><span>Study</span></button>
      </div><h2>Study</h2>
    </div>
    <div class="group g-res">
      <div class="gbody">
        <button class="big" disabled><svg><use href="#b-plot-off"/></svg><span>Select Plot</span><span>Group <i class="caret small"></i></span></button>
        <button class="big"><svg><use href="#b-plot"/></svg><span>Add Plot</span><span>Group <i class="caret small"></i></span></button>
      </div><h2>Results</h2>
    </div>
    <div class="group g-lay">
      <div class="gbody">
        <button class="big"><svg><use href="#b-windows"/></svg><span>Windows</span><span><i class="caret small"></i></span></button>
        <button class="big"><svg><use href="#b-reset"/></svg><span>Reset</span><span>Desktop <i class="caret small"></i></span></button>
      </div><h2>Layout</h2>
    </div>
  </section>

  <main class="desk">
    <section class="panel builder">
      <div class="tabs">
        <button class="tab on">Model Builder</button><button class="tab">Selection List</button>
        <span class="corner"><i class="caret"></i><svg><use href="#i-pin"/></svg></span>
      </div>
      <div class="tools">
        <button title="Previous" class="blue"><svg class="ico"><use href="#i-left"/></svg></button>
        <button title="Next" class="grey"><svg class="ico"><use href="#i-right"/></svg></button>
        <button title="Move up" class="grey"><svg class="ico"><use href="#i-up"/></svg></button>
        <button title="Move down" class="blue"><svg class="ico"><use href="#i-down"/></svg></button>
        <button title="Show"><svg class="ico"><use href="#i-showeye"/></svg></button>
        <button class="drop" title="Show options"><i class="caret"></i></button>
        <button title="Collapse all"><svg class="ico"><use href="#i-collapse"/></svg></button>
        <button title="Expand all"><svg class="ico"><use href="#i-expand"/></svg></button>
        <button title="Columns"><svg class="ico"><use href="#i-cols"/></svg></button>
        <button class="drop" title="Column options"><i class="caret"></i></button>
      </div>
      <ul class="tree">
        <li><div class="row"><i class="open"></i><span class="node"><svg class="ico"><use href="#t-root"/></svg>2d_offset_by_3d_thicken_2d.mph <em>(root)</em></span></div>
          <ul>
            <li><div class="row"><i class="open"></i><span class="node"><svg class="ico"><use href="#t-globe"/></svg>Global Definitions</span></div>
              <ul><li><div class="row"><i></i><span class="node"><svg class="ico"><use href="#t-mat"/></svg>Materials</span></div></li></ul></li>
            <li><div class="row"><i class="open"></i><span class="node"><svg class="ico" viewBox="0 0 16 16"><use href="#t-comp"/><text x="9" y="8" text-anchor="middle" class="glyph-omega-small">Ω</text></svg>Component 1 <em>(comp1)</em></span></div>
              <ul>
                <li><div class="row"><i class="shut"></i><span class="node"><svg class="ico"><use href="#t-defs"/></svg>Definitions</span></div></li>
                <li><div class="row"><i class="open"></i><span class="node"><svg class="ico"><use href="#t-geom"/></svg>Geometry 1</span></div>
                  <ul>
                    <li><div class="row"><i></i><span class="node picked"><svg class="ico"><use href="#t-ic"/></svg>Interpolation Curve 1 <em>(ic1)</em></span></div></li>
                    <li><div class="row"><i></i><span class="node"><svg class="ico"><use href="#t-cross"/></svg>Cross Section 1 <em>(cro1)</em></span></div></li>
                    <li><div class="row"><i></i><span class="node"><svg class="ico"><use href="#t-ccur"/></svg>Convert to Curve 1 <em>(ccur1)</em></span></div></li>
                    <li><div class="row"><i></i><span class="node"><svg class="ico"><use href="#t-split"/></svg>Split 1 <em>(spl1)</em></span></div></li>
                    <li><div class="row"><i></i><span class="node"><svg class="ico"><use href="#t-del"/></svg>Delete Entities 2 <em>(del2)</em></span></div></li>
                    <li><div class="row"><i></i><span class="node"><svg class="ico"><use href="#t-union-w"/></svg>Form Union <em>(fin)</em></span></div></li>
                  </ul></li>
                <li><div class="row"><i></i><span class="node"><svg class="ico"><use href="#t-mat"/></svg>Materials</span></div></li>
                <li><div class="row"><i></i><span class="node"><svg class="ico"><use href="#t-mesh"/></svg>Mesh 1</span></div></li>
              </ul></li>
            <li><div class="row"><i class="open"></i><span class="node"><svg class="ico"><use href="#t-comp3"/></svg>Component 2 <em>(comp2)</em></span></div>
              <ul>
                <li><div class="row"><i class="shut"></i><span class="node"><svg class="ico"><use href="#t-defs"/></svg>Definitions</span></div></li>
                <li><div class="row"><i class="open"></i><span class="node"><svg class="ico"><use href="#t-geom"/></svg>Geometry 2</span></div>
                  <ul>
                    <li><div class="row"><i class="shut"></i><span class="node"><svg class="ico"><use href="#t-wp"/></svg>Work Plane 1 <em>(wp1)</em></span></div></li>
                    <li><div class="row"><i></i><span class="node"><svg class="ico"><use href="#t-ext"/></svg>Extrude 1 <em>(ext1)</em></span></div></li>
                    <li><div class="row"><i></i><span class="node"><svg class="ico"><use href="#t-thi"/></svg>Thicken 1 <em>(thi1)</em></span></div></li>
                    <li><div class="row"><i class="shut"></i><span class="node"><svg class="ico"><use href="#t-wp2"/></svg>Work Plane 2 <em>(wp2)</em></span></div></li>
                    <li><div class="row"><i></i><span class="node"><svg class="ico"><use href="#t-union"/></svg>Form Union <em>(fin)</em></span></div></li>
                  </ul></li>
                <li><div class="row"><i></i><span class="node"><svg class="ico"><use href="#t-mat"/></svg>Materials</span></div></li>
                <li><div class="row"><i></i><span class="node"><svg class="ico"><use href="#t-mesh"/></svg>Mesh 2</span></div></li>
              </ul></li>
            <li><div class="row"><i class="shut"></i><span class="node"><svg class="ico"><use href="#t-res"/></svg>Results</span></div></li>
          </ul></li>
      </ul>
    </section>

    <section class="panel settings">
      <div class="tabs">
        <button class="tab on">Settings</button><button class="tab">Properties</button>
        <span class="corner"><i class="caret"></i><svg><use href="#i-pin"/></svg></span>
      </div>
      <h1>Interpolation Curve</h1>
      <div class="builds">
        <button><svg class="ico"><use href="#i-buildsel"/></svg>Build Selected</button>
        <button class="drop" title="Build options"><i class="caret"></i></button>
        <button class="focus"><svg class="ico"><use href="#i-buildall"/></svg>Build All Objects</button>
      </div>
      <div class="field name"><label for="label">Label:</label><input id="label" value="Interpolation Curve 1"></div>
      <h2 class="bar"><i class="caret"></i>Interpolation Curve</h2>
      <div class="field"><label for="type">Type:</label><span class="combo"><select id="type"><option>Open curve</option></select></span></div>
      <div class="field"><label for="source">Data source:</label><span class="combo"><select id="source"><option>Table</option></select></span></div>
      <div class="sheet">
        <table>
          <thead><tr><th><span class="more">▸▸</span>x (m)</th><th>y (m)</th></tr></thead>
          <tbody>
            <tr><td>0</td><td>0</td></tr>
            <tr><td>0.9</td><td>0.1</td></tr>
            <tr><td>0.3</td><td>1.4</td></tr>
            <tr><td>0.3</td><td>0.8</td></tr>
            <tr><td></td><td></td></tr>
          </tbody>
        </table>
      </div>
      <div class="tools sheet-tools">
        <button title="Move up" class="grey"><svg class="ico"><use href="#i-up"/></svg></button>
        <button title="Move down" class="grey"><svg class="ico"><use href="#i-down"/></svg></button>
        <button title="Delete row"><svg class="ico"><use href="#i-listdel"/></svg></button>
        <button title="Load"><svg class="ico"><use href="#i-open"/></svg></button>
        <button title="Save"><svg class="ico"><use href="#i-save"/></svg></button>
      </div>
      <div class="field"><label for="tol">Relative tolerance:</label><input id="tol" value="0"></div>
      <h2 class="bar second"><i class="caret"></i>Selections of Resulting Entities</h2>
      <div class="field contrib"><label for="contrib">Contribute to:</label><span class="combo"><select id="contrib"><option>None</option></select></span><button class="push">New</button></div>
      <fieldset>
        <legend><input type="checkbox" id="ros"><label for="ros">Resulting objects selection</label></legend>
        <div class="field"><label for="show">Show in physics:</label><span class="combo off"><select id="show" disabled><option>Domain selection</option></select></span></div>
      </fieldset>
    </section>

    <div class="side">
      <section class="panel graphics">
        <div class="ghead"><h1>Graphics</h1><span class="corner"><i class="caret"></i><svg><use href="#i-pin"/></svg></span></div>
        <div class="tools">
          <button title="Zoom in"><svg class="ico"><use href="#g-zoomin"/></svg></button>
          <button title="Zoom out"><svg class="ico"><use href="#g-zoomout"/></svg></button>
          <button title="Zoom box"><svg class="ico"><use href="#g-zoombox"/></svg></button>
          <button title="Center"><svg class="ico"><use href="#g-center"/></svg></button>
          <button title="Zoom extents"><svg class="ico"><use href="#g-extents"/></svg></button>
          <i class="sep"></i>
          <button title="Axis view"><svg class="ico"><use href="#g-axes"/></svg></button>
          <button class="drop" title="Axis options"><i class="caret"></i></button>
          <i class="sep"></i>
          <button title="Edit"><svg class="ico"><use href="#g-edit"/></svg></button>
          <button title="Objects" class="pressed"><svg class="ico"><use href="#g-objects"/></svg></button>
          <button title="Domains"><svg class="ico"><use href="#g-domain"/></svg></button>
          <button title="Boundaries"><svg class="ico"><use href="#g-boundary"/></svg></button>
          <button title="Points"><svg class="ico"><use href="#g-point"/></svg></button>
          <button title="No selection"><svg class="ico"><use href="#g-none"/></svg></button>
          <i class="sep"></i>
          <button title="Highlight"><svg class="ico"><use href="#g-hl1"/></svg></button>
          <button title="Adjacent"><svg class="ico"><use href="#g-hl2"/></svg></button>
          <button title="Select box"><svg class="ico"><use href="#i-select"/></svg></button>
          <button title="Clear selection"><svg class="ico"><use href="#i-clear"/></svg></button>
          <i class="sep"></i>
          <button title="Hide"><svg class="ico"><use href="#g-eyeoff"/></svg></button>
          <button title="View unhidden" class="pressed"><svg class="ico"><use href="#g-eye"/></svg></button>
          <button title="View hidden"><svg class="ico"><use href="#g-eyehide"/></svg></button>
          <button title="View all"><svg class="ico"><use href="#g-eyeboth"/></svg></button>
          <button title="Reset hiding"><svg class="ico"><use href="#g-reset"/></svg></button>
          <i class="sep"></i>
          <button title="Snapshot"><svg class="ico"><use href="#g-camera"/></svg></button>
          <button title="Print"><svg class="ico"><use href="#g-print"/></svg></button>
        </div>
        <svg class="plot" id="plot" viewBox="0 0 919 700" role="img" aria-label="Offset curve and original curve">
          <rect x="50" y="6" width="864" height="671" fill="#f8fdff"/>
          <g id="grid" class="grid"></g>
          <g id="ticks" class="ticks"></g>
          <g id="labels" class="labels"></g>
          <g id="curves" class="curves"></g>
          <path d="M397 682l7-6l7 6zM47 232l5 5l-5 5z"/>
          <g class="arrows">
            <path d="M285 186H340V168L396 203L340 238V220H285z"/>
            <path d="M537 351H582V328L627 374L582 419V396H537z"/>
          </g>
          <text class="note" x="115" y="211">Offset curve</text>
          <text class="note" x="357" y="383">Original curve</text>
          <svg x="888" y="11" width="18" height="18"><use href="#i-logo"/></svg>
        </svg>
      </section>

      <section class="panel logs">
        <div class="tabs">
          <button class="tab">Progress</button><button class="tab on">Log</button><button class="tab">External Process</button><button class="tab">Table</button>
          <span class="corner"><i class="caret"></i><svg><use href="#i-pin"/></svg></span>
        </div>
        <div class="tools">
          <button title="Scroll lock"><svg class="ico"><use href="#i-lock"/></svg></button>
          <button title="Clear"><svg class="ico"><use href="#i-broom"/></svg></button>
          <button title="Export"><svg class="ico"><use href="#i-export"/></svg></button>
        </div>
        <textarea readonly aria-label="Log">========== Opened 2d_offset_by_3d_thicken_2d.mph ===========
============================================================</textarea>
      </section>
    </div>
  </main>
  <footer class="status"><span>868 MB | 1003 MB</span></footer>
</div>
<script src="script.js"></script>
</body>
</html>
```

FILE: styles.css
```css
* { box-sizing: border-box; }

body {
  margin: 0;
  padding-right: 8px;
  background: #fff;
  color: #000;
  font: 11px/16px "Open Sans", "Noto Sans", sans-serif;
}

h1, h2, ul { margin: 0; padding: 0; font-weight: 400; }
button, input, select, textarea { font: inherit; color: inherit; }
button { padding: 0; border: 0; background: none; white-space: nowrap; }
svg { display: block; overflow: visible; }
.sprite { position: absolute; width: 0; height: 0; }
.ico { width: 16px; height: 16px; flex: none; }

.caret {
  display: inline-block;
  flex: none;
  width: 8px;
  height: 4px;
  background: currentColor;
  clip-path: polygon(0 0, 100% 0, 50% 100%);
}
.caret.small { width: 5px; height: 3px; margin: 0 0 3px 2px; }

.window { display: flex; flex-direction: column; min-height: 100vh; background: #fafbff; }

/* Title bar */
.titlebar {
  position: relative;
  display: flex;
  justify-content: space-between;
  height: 18px;
  border-bottom: 1px solid #5c5c5c;
  box-shadow: inset 0 -1px #d8d8d8;
  background: linear-gradient(90deg, #d3d2cf 0, #a6a49f 3%, #bbb8b2 8%, #a29f9a 12%, #b5b2ac 16%, #6d6b68 20%, #4d4b4a 23%, #595754 32%, #858884 34%, #7b7d79 38%, #cfd4cd 40%, #7d8578 42%, #878d7d 48%, #a1a49d 52%, #8d918a 58%, #b4b8b1 62%, #c1c5bf 66%, #8e908c 68%, #bdc1bc 74%, #d3d8d3 80%, #aeb2ae 85%, #bfc4bf 92%, #8d8f8d 95%, #d5d5d5 100%);
}
.quick { display: flex; align-items: center; padding-left: 1px; }
.quick button { width: 24px; display: flex; justify-content: center; }
.quick .caret { margin: 0 4px 0 3px; }
.tsep { width: 2px; height: 12px; margin: 0 3px 0 8px; background: #777; border-right: 1px solid #ddd; }
.wintitle { position: absolute; left: 980px; top: 0; font-size: 12px; text-shadow: 0 0 6px #fff; }
.winbtns { display: flex; width: 103px; height: 16px; margin-right: 3px; border: 1px solid #555; border-top: 0; border-radius: 0 0 4px 4px; overflow: hidden; }
.winbtns button { width: 28px; background: linear-gradient(#cfcfd2, #85868b); border-right: 1px solid #555; }
.winbtns .close { flex: 1; border: 0; background: linear-gradient(#efa295, #c6402b 50%, #d25c3d); }

/* Ribbon */
.menu { position: relative; z-index: 1; display: flex; align-items: flex-end; height: 27px; margin: 0 3px; font-size: 12px; color: #2b579a; }
.menu .file { width: 56px; height: 24px; margin: 0 3px 1px 0; background: #2b579a; color: #fff; }
.menu a { height: 24px; padding: 0 12px; line-height: 27px; color: #2b579a; text-decoration: none; }
.menu a.active { margin-bottom: -1px; height: 25px; border: 1px solid #b9c6d8; border-bottom: 0; border-radius: 3px 3px 0 0; padding: 0 11px; background: #fff; color: #3b5fb5; }
.menu .help { width: 14px; height: 14px; margin: 0 4px 6px auto; background: #4a80b9; color: #fff; font-weight: 700; line-height: 14px; }

.ribbon { display: flex; height: 91px; margin: 0 3px; padding-top: 6px; border: 1px solid #b9c6d8; background: linear-gradient(#fff, #fcfdff); font-size: 12px; }
.group { display: flex; flex-direction: column; height: 76px; border-right: 1px solid #b9c6d8; }
.gbody { display: grid; flex: none; height: 64px; align-items: start; }
.group h2 { flex: none; color: #9b9ba1; font-size: 12px; line-height: 16px; text-align: center; }
.big { display: flex; flex-direction: column; align-items: center; line-height: 13px; }
.big svg { width: 32px; height: 32px; margin-bottom: 3px; }
.big:disabled, .stack button:disabled { color: #b5b5b5; }
.stack { display: flex; flex-direction: column; align-items: flex-start; }
.stack button { display: flex; align-items: center; height: 22px; margin-top: -3px; margin-bottom: 3px; }
.stack .ico { margin-right: 1px; }
.stack .caret { margin: 3px 0 0 5px; }
.stack b { width: 18px; color: #4a6f9f; font-weight: 600; text-align: left; }
.stack sub { font-size: 11px; }
.g-app { width: 227px; } .g-app .gbody { grid-template-columns: 80px 1fr; }
.g-model { width: 167px; padding: 0 6px; } .g-model .gbody { grid-template-columns: 1fr 1fr; }
.g-defs { width: 100px; } .g-defs .gbody { padding-left: 11px; }
.g-geom { width: 135px; } .g-geom .gbody { grid-template-columns: 55px 1fr; }
.g-mat { width: 65px; }
.g-phys { width: 218px; } .g-phys .gbody { grid-template-columns: 90px 46px 78px; }
.g-mesh { width: 102px; padding: 0 7px; } .g-mesh .gbody { grid-template-columns: 1fr 1fr; }
.g-study { width: 159px; } .g-study .gbody { grid-template-columns: 60px 44px 44px; padding-left: 6px; }
.g-res { width: 134px; padding: 0 6px; } .g-res .gbody { grid-template-columns: 1fr 1fr; }
.g-lay { width: 128px; padding: 0 6px; } .g-lay .gbody { grid-template-columns: 1fr 1fr; }
.glyph-a { font: 300 29px "Open Sans", sans-serif; fill: #4b962c; stroke: #4b962c; }
.glyph-omega { font: 700 11px "Open Sans", sans-serif; fill: #fff; }
.glyph-omega-small { font: 700 8px "Open Sans", sans-serif; fill: #fff; }

/* Desktop */
.desk { flex: 1; display: grid; grid-template-columns: 368px 615px minmax(0, 1fr); gap: 5px; padding: 4px 3px; }
.panel { display: flex; flex-direction: column; border: 1px solid #d3d6dc; min-width: 0; }
.side { display: flex; flex-direction: column; gap: 6px; min-width: 0; }
.tabs { display: flex; gap: 8px; height: 30px; padding: 6px 2px 0 4px; border-bottom: 1px solid #d0d3d8; font-size: 12px; }
.tab { height: 23px; padding: 0 5px; background: #ebebeb; }
.tab.on { height: 24px; border: 1px solid #d0d3d8; border-bottom: 0; background: #fafbff; color: #2f5da8; }
.corner { display: flex; gap: 5px; align-items: center; height: 18px; margin-left: auto; color: #c9ced8; fill: currentColor; }
.corner svg { width: 10px; height: 12px; }
.tools { display: flex; align-items: center; height: 26px; padding: 0 2px; }
.tools button { display: flex; justify-content: center; align-items: center; width: 24px; height: 18px; }
.tools .drop { width: 17px; }
.blue { fill: #4a80b9; }
.grey { fill: #b8b8b8; }
.tools .sep { width: 1px; height: 16px; margin: 0 8px 0 7px; background: #ccc; }
.tools .pressed { width: 18px; margin: 0 3px; border: 1px solid #2f5da8; border-radius: 2px; background: linear-gradient(#7d9cc9, #dcebfa); }

/* Model builder */
.builder .tools { height: 28px; }
.tree { flex: 1; margin: 0 4px 8px; padding-top: 2px; border: 1px solid #c9ccd1; background: #fff; list-style: none; }
.tree ul { padding-left: 19px; list-style: none; }
.row { display: flex; align-items: center; height: 17px; white-space: nowrap; }
.row > i { width: 20px; height: 8px; flex: none; }
.row > i::before { content: ""; display: block; width: 7px; height: 7px; margin-left: 7px; }
.row > .open::before { background: #333; clip-path: polygon(100% 0, 100% 100%, 0 100%); }
.row > .shut::before { width: 5px; height: 8px; margin-left: 8px; background: #aaa; clip-path: polygon(0 0, 100% 50%, 0 100%, 0 0, 1px 2px, 1px 6px, 4px 4px, 1px 2px); }
.node { display: flex; align-items: center; gap: 4px; height: 17px; padding-right: 2px; }
.picked { background: #dadadc; }

/* Settings */
.settings { border-color: #91c9f7; }
.settings .tab.on { color: #2a8fe0; }
.settings .corner { color: #444; }
.settings > h1 { height: 28px; padding: 7px 4px 0; font-size: 14px; line-height: 20px; font-weight: 300; color: #2a8fe0; }
.builds { display: flex; height: 16px; padding-left: 6px; }
.builds button { display: flex; align-items: center; gap: 5px; }
.builds .ico { width: 14px; height: 14px; }
.builds .drop { width: 26px; justify-content: center; }
.builds .focus { margin-left: 3px; outline: 1px dashed #777; padding: 0 1px; }
.field { display: flex; align-items: center; height: 20px; margin: 0 15px 6px 5px; }
.field label { width: 106px; }
.field input { flex: 1; height: 20px; min-width: 0; padding: 0 3px; border: 1px solid #d0d3d8; background: #fff; }
.field.name { margin: 14px 5px 9px; }
.field.name label { width: 41px; }
.bar { display: flex; align-items: center; gap: 15px; height: 25px; margin-bottom: 9px; padding-left: 5px; background: #dee8f4; font-size: 12px; }
.bar .caret { width: 9px; height: 5px; background: #444; }
.combo { position: relative; flex: 1; }
.combo::after { content: ""; position: absolute; right: 4px; top: 9px; width: 7px; height: 4px; background: #000; clip-path: polygon(0 0, 100% 0, 50% 100%); }
.combo select { display: block; width: 100%; height: 20px; padding: 0 11px; appearance: none; border: 1px solid #999ba0; border-radius: 2px; background: linear-gradient(#f0f0f0, #e4e4e4); }
.combo.off::after { background: #ccc; }
.combo select:disabled { color: #777; opacity: 1; }
.sheet { height: 300px; margin: 0 15px 0 5px; border: 1px solid #d3d3d6; border-bottom-width: 3px; background: #fcfdff; }
.sheet table { width: 100%; border-collapse: collapse; table-layout: fixed; }
.sheet th { height: 26px; padding: 4px 0 0 17px; border-right: 1px solid #ddd; background: linear-gradient(#fff, #f0f1f4); font-weight: 400; text-align: left; }
.sheet th + th { padding-left: 5px; border: 0; }
.sheet .more { float: left; margin: -9px 0 0 -12px; font: 8px/10px "DejaVu Sans", sans-serif; }
.sheet td { height: 18px; padding: 0 2px; border: 1px solid #a3a3a3; border-left: 0; line-height: 16px; }
.sheet td + td { border-right: 0; }
.sheet-tools { height: 32px; padding: 0 7px; }
.settings .bar.second { margin-top: 5px; }
.field.contrib { margin: 0 3px 10px 5px; }
.field.contrib label { width: 84px; }
.push { width: 60px; height: 20px; margin: -3px 0 0 9px; border: 1px solid #999ba0; border-radius: 2px; background: linear-gradient(#f4f4f4, #e6e6e6); }
fieldset { margin: 0 7px 0 6px; padding: 4px 8px 8px 9px; border: 1px solid #dcdfe5; border-radius: 3px; }
legend { display: flex; align-items: center; gap: 4px; margin-left: -3px; padding: 0 6px; height: 16px; }
legend input { appearance: none; width: 13px; height: 13px; margin: 0; border: 1px solid #8e8f8f; background: linear-gradient(135deg, #d3d6da, #fff); box-shadow: inset 0 0 0 2px #f4f4f4; }
fieldset .field { margin: 0; color: #777; }
fieldset .field label { width: 97px; }

/* Graphics */
.ghead { display: flex; justify-content: space-between; height: 28px; padding: 0 2px 0 7px; }
.ghead h1 { padding-top: 7px; font-size: 18px; line-height: 24px; font-weight: 300; color: #2b579a; }
.ghead .corner { margin-top: 9px; }
.graphics .tools { height: 27px; }
.plot { width: 100%; height: auto; background: #fff; }
.grid { stroke: #cfe0e9; shape-rendering: crispEdges; }
.ticks { stroke: #000; fill: none; shape-rendering: crispEdges; }
.labels { font: 12px "DejaVu Sans", sans-serif; }
.curves { fill: none; stroke: #000; shape-rendering: crispEdges; }
.arrows { fill: none; stroke: #000; stroke-width: 5; stroke-linejoin: round; }
.note { font: 700 25px Lato, sans-serif; font-variant-ligatures: none; }

/* Log */
.logs { flex: 1; }
.logs .tools { height: 28px; }
.logs textarea { flex: 1; margin: 0 4px 4px; padding: 1px 2px; border: 1px solid #d0d3d8; outline: 0; resize: none; background: #fafbff; font: 12px/15px "Liberation Mono", monospace; }

.status { height: 27px; background: #f0edec; text-align: center; line-height: 31px; }
.status span { margin-left: 690px; }
```

FILE: script.js
```js
const NS = "http://www.w3.org/2000/svg";
const unit = 386;
const origin = { x: 305, y: 573 };
const frame = { left: 50, right: 914, top: 6, bottom: 677 };

const px = x => Math.round(origin.x + unit * x);
const py = y => Math.round(origin.y - unit * y);

function add(parent, tag, attrs, text) {
  const el = document.createElementNS(NS, tag);
  for (const key in attrs) el.setAttribute(key, attrs[key]);
  if (text !== undefined) el.textContent = text;
  document.getElementById(parent).append(el);
}

function label(n) {
  return String(Math.round(n * 10) / 10);
}

let grid = "", ticks = "";
for (let i = -13; i <= 31; i++) {
  const x = px(i / 20) + 0.5;
  if (x > frame.right) break;
  const major = i % 4 === 0;
  grid += `M${x} ${frame.top}V${frame.bottom}`;
  ticks += `M${x} ${frame.bottom}v${major ? 7 : 3}M${x} ${frame.top}v${major ? -6 : -3}`;
  if (major) add("labels", "text", { x: x, y: 695 }, label(i / 20));
}
for (let i = -5; i <= 29; i++) {
  const y = py(i / 20) + 0.5;
  const major = i % 2 === 0;
  grid += `M${frame.left} ${y}H${frame.right}`;
  ticks += `M${frame.left} ${y}h${major ? -7 : -3}M${frame.right} ${y}h${major ? 5 : 3}`;
  if (major) add("labels", "text", { x: 42, y: y + 10, "text-anchor": "end" }, label(i / 20));
}
add("grid", "path", { d: grid });
add("ticks", "path", { d: ticks });
add("ticks", "rect", { x: 50.5, y: 6.5, width: 863, height: 671 });

const curve = [
  [0, 0], [.098, -.05], [.199, -.097], [.306, -.139], [.401, -.168], [.504, -.189], [.595, -.197],
  [.66, -.191], [.703, -.182], [.746, -.166], [.798, -.135], [.841, -.09], [.871, -.031], [.891, .042],
  [.9, .104], [.902, .166], [.897, .262], [.882, .363], [.854, .469], [.815, .6], [.781, .705],
  [.729, .829], [.677, .938], [.599, 1.085], [.526, 1.2], [.452, 1.297], [.401, 1.35], [.349, 1.387],
  [.307, 1.4], [.28, 1.394], [.258, 1.37], [.245, 1.333], [.239, 1.29], [.237, 1.2], [.241, 1.127],
  [.251, 1.04], [.267, .947], [.283, .874], [.3, .8]
];

// Shift every point sideways by d, along the local normal.
function offset(points, d) {
  return points.map(([x, y], i) => {
    const a = points[Math.max(i - 1, 0)], b = points[Math.min(i + 1, points.length - 1)];
    const dx = b[0] - a[0], dy = b[1] - a[1], len = Math.hypot(dx, dy);
    return [x + d * dy / len, y - d * dx / len];
  });
}

// Catmull-Rom spline through the points, written as cubic segments.
function spline(points) {
  const p = points.map(([x, y]) => [origin.x + unit * x, origin.y - unit * y]);
  let d = `M${p[0]}`;
  for (let i = 0; i < p.length - 1; i++) {
    const a = p[i - 1] || p[i], b = p[i], c = p[i + 1], e = p[i + 2] || c;
    d += `C${b[0] + (c[0] - a[0]) / 6} ${b[1] + (c[1] - a[1]) / 6} ${c[0] - (e[0] - b[0]) / 6} ${c[1] - (e[1] - b[1]) / 6} ${c}`;
  }
  return d;
}

for (const points of [curve, offset(curve, .026)]) {
  add("curves", "path", { d: spline(points) });
  for (const [x, y] of [points[0], points[points.length - 1]])
    add("curves", "rect", { x: px(x) - 1, y: py(y) - 1, width: 2, height: 2, fill: "#000" });
}
```
